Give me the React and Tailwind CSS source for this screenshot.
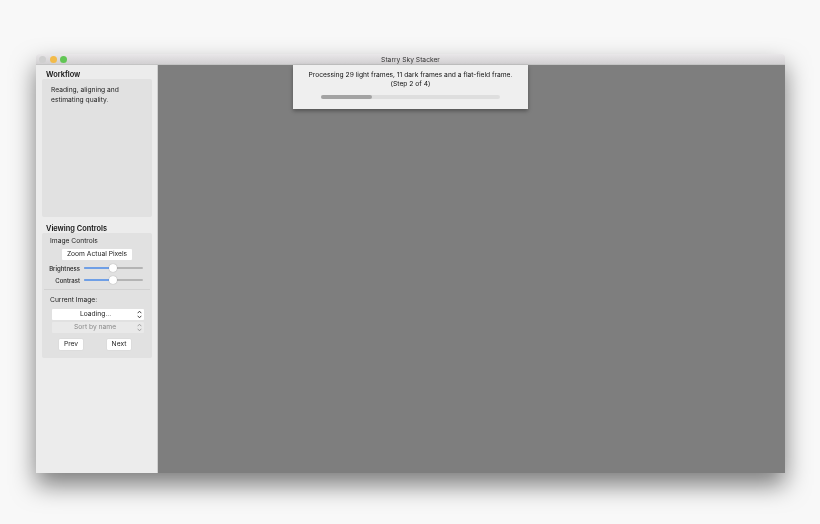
const font = { fontFamily: 'Inter, "Liberation Sans", sans-serif' };

function Slider({ label }) {
  return (
    <div className="flex items-center h-[12px]">
      <span className="w-[36px] text-right text-[6px] font-medium text-[#222]">{label}</span>
      <div className="relative ml-[4px] w-[59px] h-[2px] rounded-full bg-[#b4b4b4]">
        <div className="h-full w-[29px] rounded-full bg-[#6f9fe6]" />
        <div className="absolute left-[25px] top-[-3px] w-[8px] h-[8px] rounded-full bg-white shadow-[0_0_1px_rgba(0,0,0,0.4)]" />
      </div>
    </div>
  );
}

function Stepper({ color }) {
  return (
    <svg width="5" height="9" viewBox="0 0 5 9" fill="none" stroke={color} strokeWidth="0.9">
      <path d="M0.7 3.2 2.5 1.2 4.3 3.2" />
      <path d="M0.7 5.8 2.5 7.8 4.3 5.8" />
    </svg>
  );
}

function SmallButton({ children }) {
  return (
    <div className="flex items-center justify-center w-[24px] h-[11px] bg-white rounded-[1px] text-[6.7px] text-[#222] shadow-[0_0_1px_rgba(0,0,0,0.2)]">
      {children}
    </div>
  );
}

export default function App() {
  return (
    <div className="w-[820px] h-[524px] overflow-hidden bg-[#f8f8f8] pt-[54px] pl-[36px] blur-[0.35px]" style={font}>
      <div className="relative flex flex-col w-[749px] h-[419px] rounded-t-[3px] shadow-[0_12px_24px_rgba(0,0,0,0.5)]">
        {/* title bar */}
        <div className="relative flex items-center justify-center h-[11px] pt-[2px] shrink-0 rounded-t-[3px] bg-gradient-to-b from-[#e9e7e9] to-[#d2d0d2] border-b border-[#c4c4c4]">
          <div className="absolute left-[3px] top-[2px] flex gap-[3.5px]">
            <div className="w-[7px] h-[7px] rounded-full bg-[#cfcfcf]" />
            <div className="w-[7px] h-[7px] rounded-full bg-[#f2bb4a]" />
            <div className="w-[7px] h-[7px] rounded-full bg-[#62c655]" />
          </div>
          <span className="text-[6.7px] leading-none text-[#333]">Starry Sky Stacker</span>
        </div>

        <div className="relative flex flex-1 min-h-0">
          {/* sidebar */}
          <div className="flex flex-col w-[122px] shrink-0 bg-[#ececec] border-r border-[#cfcfcf] pl-[6px] pr-[5px]">
            <div className="pl-[4px] pt-[5px] h-[14px] flex items-center text-[7.4px] font-semibold text-[#111]">Workflow</div>
            <div className="h-[138px] rounded-[2px] bg-[#e1e1e1] pl-[9px] pt-[7px] text-[6.7px] leading-[9.5px] text-[#222]">
              Reading, aligning and<br />estimating quality.
            </div>

            <div className="mt-[7px] pl-[4px] h-[9px] flex items-center text-[7.4px] font-semibold text-[#111]">Viewing Controls</div>
            <div className="h-[125px] rounded-[2px] bg-[#e1e1e1] px-[2px] pt-[3px]">
              <div className="pl-[6px] text-[6.7px] leading-[10px] text-[#222]">Image Controls</div>
              <div className="mt-[3px] ml-[18px] flex items-center justify-center w-[70px] h-[11px] bg-white rounded-[1px] text-[6.7px] text-[#222]">
                Zoom Actual Pixels
              </div>
              <div className="mt-[2px]">
                <Slider label="Brightness" />
                <Slider label="Contrast" />
              </div>
              <div className="mt-[3px] border-t border-[#d2d2d2] pl-[6px] pt-[5px] text-[6.7px] leading-[10px] text-[#222]">Current Image:</div>
              <div className="mt-[4px] ml-[8px] flex items-center justify-between w-[92px] h-[11px] pl-[28px] pr-[2px] bg-white rounded-[1px] text-[6.7px] text-[#222]">
                <span>Loading...</span>
                <Stepper color="#333" />
              </div>
              <div className="mt-[2px] ml-[8px] flex items-center justify-between w-[92px] h-[11px] pl-[22px] pr-[2px] bg-[#e9e9e9] rounded-[1px] text-[6.7px] text-[#888]">
                <span>Sort by name</span>
                <Stepper color="#999" />
              </div>
              <div className="mt-[6px] flex justify-between pl-[15px] pr-[19px]">
                <SmallButton>Prev</SmallButton>
                <SmallButton>Next</SmallButton>
              </div>
            </div>
          </div>

          {/* image area */}
          <div className="flex-1 bg-[#7e7e7e]" />

          {/* progress sheet */}
          <div className="absolute left-[257px] top-0 w-[235px] h-[44px] flex flex-col items-center bg-[#efefef] shadow-[0_2px_4px_rgba(0,0,0,0.35)] pt-[6px]">
            <div className="text-center text-[6.7px] leading-[9px] text-[#111]">
              Processing 29 light frames, 11 dark frames and a flat-field frame.<br />(Step 2 of 4)
            </div>
            <div className="mt-[6px] w-[179px] h-[4px] rounded-full bg-[#dedede]">
              <div className="h-full w-[51px] rounded-full bg-[#a3a3a3]" />
            </div>
          </div>
        </div>
      </div>
    </div>
  );
}
